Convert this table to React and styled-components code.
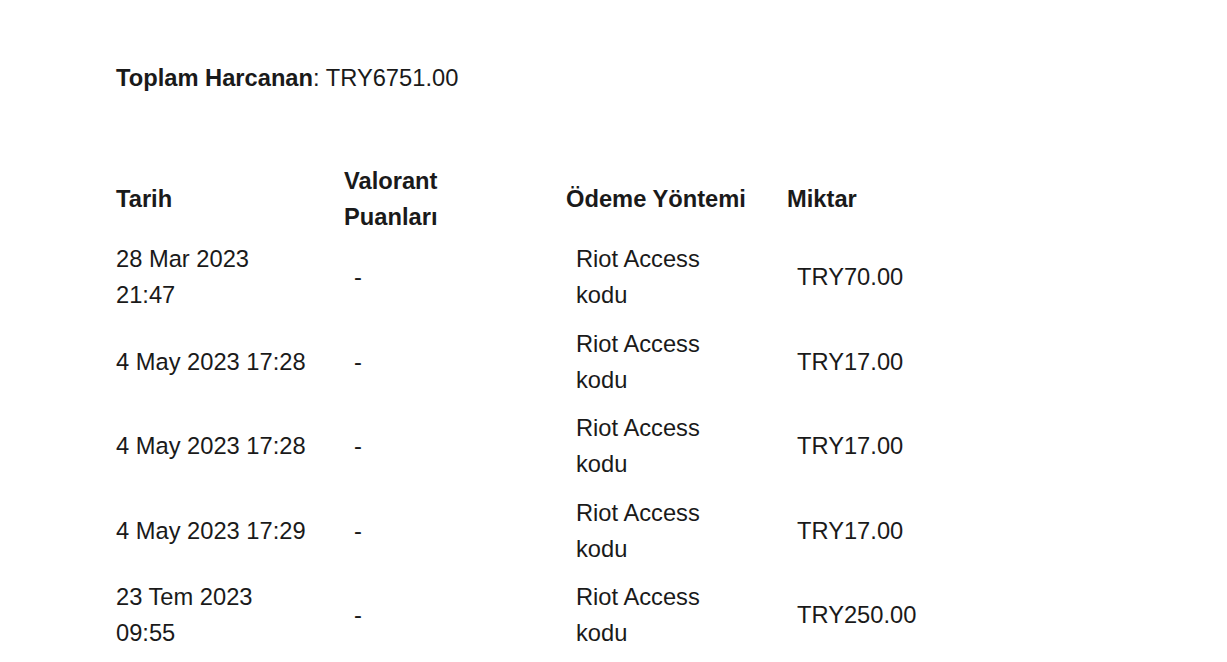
import React from "react";
import styled, { createGlobalStyle } from "styled-components";

const rows = [
  { date: "28 Mar 2023 21:47", points: "-", method: "Riot Access kodu", amount: "TRY70.00" },
  { date: "4 May 2023 17:28", points: "-", method: "Riot Access kodu", amount: "TRY17.00" },
  { date: "4 May 2023 17:28", points: "-", method: "Riot Access kodu", amount: "TRY17.00" },
  { date: "4 May 2023 17:29", points: "-", method: "Riot Access kodu", amount: "TRY17.00" },
  { date: "23 Tem 2023 09:55", points: "-", method: "Riot Access kodu", amount: "TRY250.00" },
];

// left / right padding for each column of the body
const bodyPad = [
  [0, 32],
  [10, 20],
  [10, 49],
  [10, 0],
];

const App = () => {
  return (
    <>
      <GlobalStyle />
      <Page>
        <Total>
          <strong>Toplam Harcanan</strong>: TRY6751.00
        </Total>

        <Table>
          <colgroup>
            <col style={{ width: 228 }} />
            <col style={{ width: 222 }} />
            <col style={{ width: 221 }} />
            <col style={{ width: 220 }} />
          </colgroup>
          <thead>
            <tr>
              <Head>Tarih</Head>
              <Head $right={60}>Valorant Puanları</Head>
              <Head>Ödeme Yöntemi</Head>
              <Head>Miktar</Head>
            </tr>
          </thead>
          <tbody>
            {rows.map((row, i) => (
              <tr key={i}>
                {[row.date, row.points, row.method, row.amount].map((v, j) => (
                  <Cell key={j} $left={bodyPad[j][0]} $right={bodyPad[j][1]}>
                    {v}
                  </Cell>
                ))}
              </tr>
            ))}
          </tbody>
        </Table>
      </Page>
    </>
  );
};

const GlobalStyle = createGlobalStyle`
  body {
    margin: 0;
    background: #fff;
    font-family: "Liberation Sans", Arial, sans-serif;
    color: #1a1a1a;
  }
`;

const Page = styled.div`
  padding: 60px 0 0 116px;
  font-size: 23.7px;
  line-height: 36px;
`;

const Total = styled.div`
  strong {
    font-weight: 700;
  }
`;

const Table = styled.table`
  margin-top: 67px;
  border-collapse: collapse;
  table-layout: fixed;
  width: 891px;
`;

const Head = styled.th`
  padding: 0 ${(p) => p.$right || 0}px 0 0;
  text-align: left;
  vertical-align: middle;
  font-weight: 700;
`;

const Cell = styled.td`
  padding: 6.25px ${(p) => p.$right}px 6.25px ${(p) => p.$left}px;
  text-align: left;
  vertical-align: middle;
`;

export default App;
